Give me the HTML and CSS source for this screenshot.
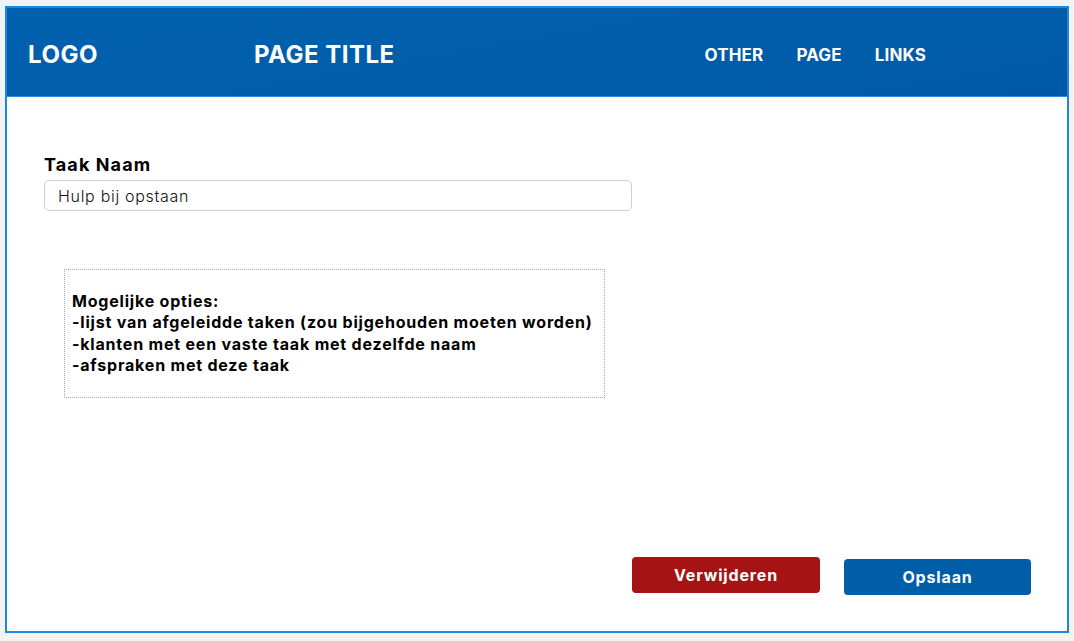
FILE: index.html
```html
<!DOCTYPE html>
<html lang="nl">
<head>
<meta charset="utf-8">
<title>Taak</title>
<link rel="stylesheet" href="styles.css">
</head>
<body>
<div class="frame">
  <header class="topbar">
    <div class="logo">LOGO</div>
    <div class="title">PAGE TITLE</div>
    <nav class="nav">
      <a href="#">OTHER</a>
      <a href="#">PAGE</a>
      <a href="#">LINKS</a>
    </nav>
  </header>
  <main class="content">
    <label class="label" for="naam">Taak Naam</label>
    <input class="field" id="naam" type="text" value="Hulp bij opstaan">
    <div class="note">
      <p>Mogelijke opties:<br>-lijst van afgeleidde taken (zou bijgehouden moeten worden)<br>-klanten met een vaste taak met dezelfde naam<br>-afspraken met deze taak</p>
    </div>
    <div class="actions">
      <button class="btn btn-danger" type="button">Verwijderen</button>
      <button class="btn btn-primary" type="button">Opslaan</button>
    </div>
  </main>
</div>
</body>
</html>
```

FILE: styles.css
```css
html, body {
  margin: 0;
  padding: 0;
  background: #f3f3f3;
}
body {
  font-family: Inter, "Liberation Sans", sans-serif;
  padding: 6px 5px 8px 5px;
}
.frame {
  box-sizing: border-box;
  width: 1064px;
  height: 627px;
  border: 2px solid #1c86e0;
  background: #ffffff;
  display: flex;
  flex-direction: column;
}
.topbar {
  box-sizing: border-box;
  height: 89px;
  border-bottom: 1px solid #2b8ce0;
  background: linear-gradient(170deg, #0161ae 0%, #0059a6 100%);
  display: flex;
  align-items: center;
  padding-left: 21px;
  padding-top: 4px;
  color: #ffffff;
  font-weight: 700;
}
.logo {
  width: 226px;
  font-size: 24px;
  letter-spacing: 0.5px;
}
.title {
  flex: 1;
  font-size: 24px;
  letter-spacing: 0.5px;
}
.nav {
  display: flex;
  gap: 33px;
  padding-right: 141px;
  margin-top: 2px;
}
.nav a {
  color: #ffffff;
  text-decoration: none;
  font-size: 17px;
  font-weight: 700;
  letter-spacing: 0.15px;
}
.content {
  flex: 1;
  display: flex;
  flex-direction: column;
  padding: 56px 36px 36px 37px;
}
.label {
  font-size: 18px;
  font-weight: 700;
  line-height: 24px;
  letter-spacing: 1.1px;
  color: #000;
  margin-bottom: 3px;
}
.field {
  box-sizing: border-box;
  width: 588px;
  height: 31px;
  border: 1px solid #cfcfcf;
  border-radius: 5px;
  padding: 0 13px;
  font-family: Inter, "Liberation Sans", sans-serif;
  font-size: 16px;
  font-weight: 300;
  letter-spacing: 0.7px;
  color: #111;
  outline: none;
}
.note {
  box-sizing: border-box;
  width: 541px;
  height: 129px;
  margin: 58px 0 0 20px;
  border: 1px dotted #a8a8a8;
  display: flex;
  align-items: center;
  padding-left: 7px;
}
.note p {
  margin: 0;
  font-size: 16px;
  font-weight: 700;
  line-height: 21.3px;
  letter-spacing: 0.8px;
  color: #000;
}
.actions {
  margin-top: auto;
  display: flex;
  justify-content: flex-end;
  align-items: flex-end;
  gap: 24px;
}
.btn {
  width: 188px;
  height: 36px;
  border: none;
  border-radius: 4px;
  color: #fff;
  font-family: Inter, "Liberation Sans", sans-serif;
  font-size: 16px;
  font-weight: 700;
  letter-spacing: 0.85px;
  cursor: pointer;
}
.btn-danger {
  background: #a51314;
  margin-bottom: 2px;
}
.btn-primary {
  background: #005ea9;
  width: 187px;
}
```
